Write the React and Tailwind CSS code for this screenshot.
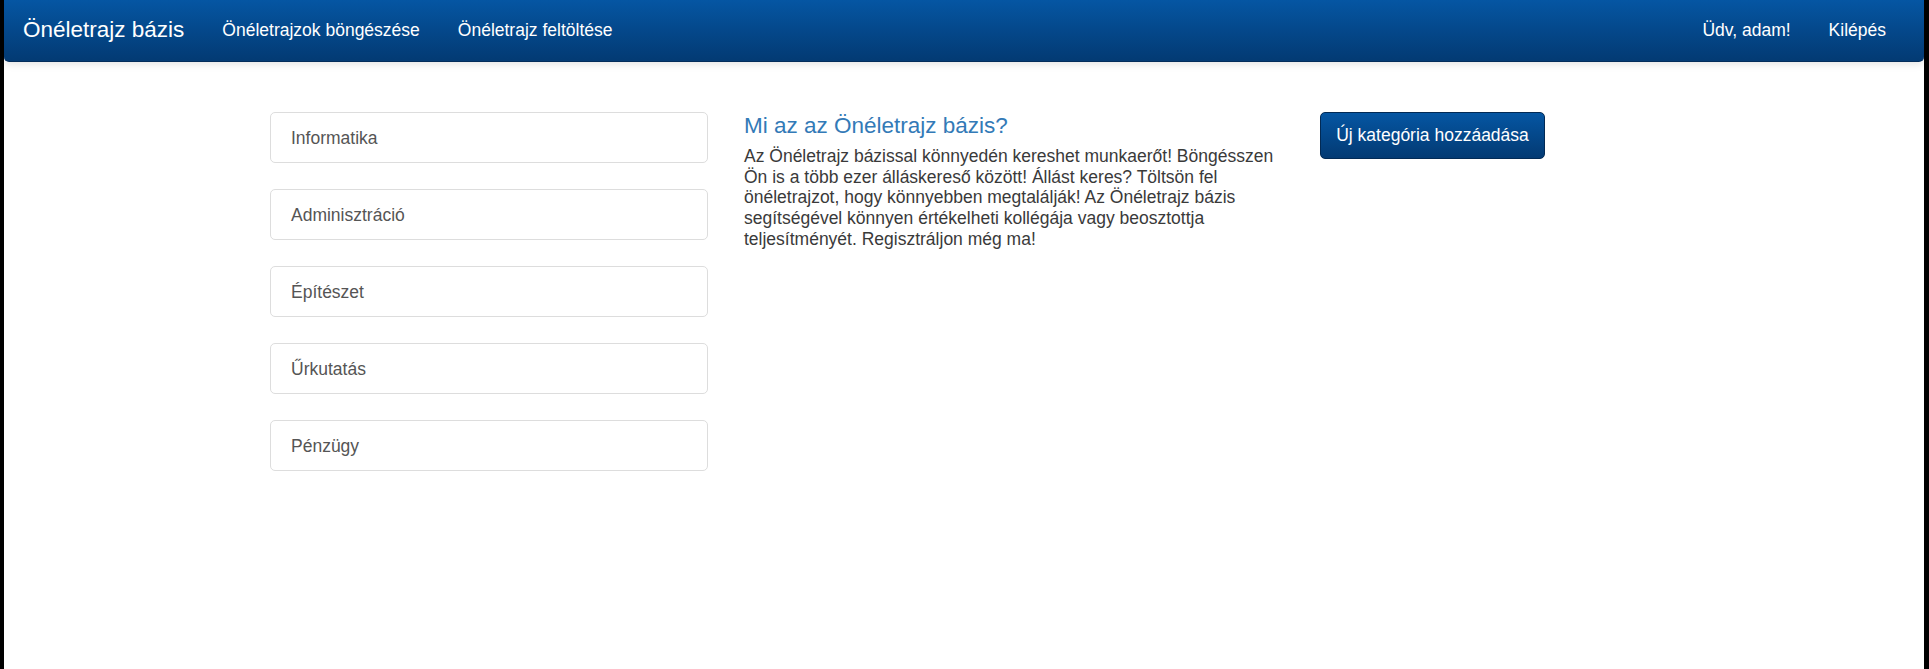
import React from 'react';

const categories = ['Informatika', 'Adminisztráció', 'Építészet', 'Űrkutatás', 'Pénzügy'];

export default function App() {
  return (
    <div className="min-h-[669px] bg-black pl-[4px] pr-[5px] flex font-['Liberation_Sans',Arial,sans-serif]">
      <div className="flex-1 bg-white flex flex-col min-h-[669px]">
        {/* navbar */}
        <nav className="h-[62px] rounded-b-[5px] bg-gradient-to-b from-[#0556a3] to-[#033a73] border-b border-[#022c5a] shadow-[0_2px_8px_rgba(0,0,0,0.12)] flex items-center text-white">
          <a href="#" className="px-[19px] text-[22.5px] leading-none">Önéletrajz bázis</a>
          <a href="#" className="px-[19px] text-[17.5px] leading-none">Önéletrajzok böngészése</a>
          <a href="#" className="px-[19px] text-[17.5px] leading-none">Önéletrajz feltöltése</a>
          <div className="ml-auto flex pr-[19px]">
            <span className="px-[19px] text-[17.5px] leading-none">Üdv, adam!</span>
            <a href="#" className="px-[19px] text-[17.5px] leading-none">Kilépés</a>
          </div>
        </nav>

        <div className="flex pt-[50px] pl-[266px]">
          <div className="w-[438px] flex flex-col gap-[26px]">
            {categories.map(c => (
              <a key={c} href="#" className="h-[51px] border border-[#dddddd] rounded-[5px] flex items-center pl-[20px] pt-[2px] text-[17.5px] text-[#555555]">
                {c}
              </a>
            ))}
          </div>

          <div className="ml-[36px] w-[548px]">
            <h4 className="mt-[1px] text-[22.5px] leading-[25px] text-[#337ab7]">Mi az az Önéletrajz bázis?</h4>
            <p className="mt-[8px] text-[17.5px] leading-[20.7px] text-[#3a3a3a]">
              Az Önéletrajz bázissal könnyedén kereshet munkaerőt! Böngésszen Ön is a több ezer álláskereső között! Állást keres? Töltsön fel önéletrajzot, hogy könnyebben megtalálják! Az Önéletrajz bázis segítségével könnyen értékelheti kollégája vagy beosztottja teljesítményét. Regisztráljon még ma!
            </p>
          </div>

          <div className="ml-[28px]">
            <button className="w-[225px] h-[47px] rounded-[5px] border border-[#022a55] bg-gradient-to-b from-[#0556a3] to-[#033a73] text-white text-[17.5px]">
              Új kategória hozzáadása
            </button>
          </div>
        </div>
      </div>
    </div>
  );
}
